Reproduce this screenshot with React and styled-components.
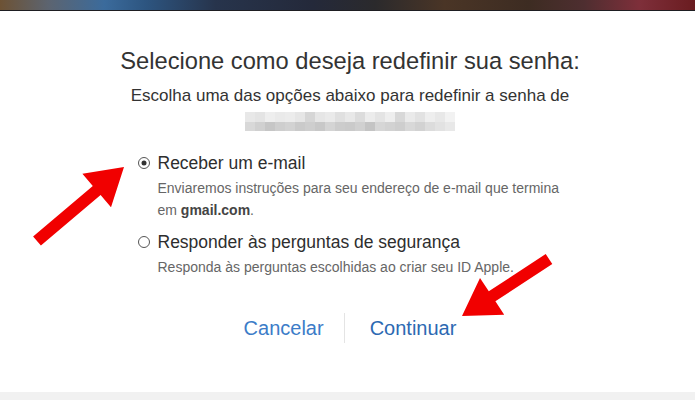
import styled, { createGlobalStyle } from "styled-components";

const GlobalStyle = createGlobalStyle`
  html, body {
    margin: 0;
    padding: 0;
    background: #ffffff;
  }
  body {
    font-family: "Liberation Sans", Arial, sans-serif;
  }
`;

// pixelated email (censored in the screenshot)
const blurRows = [
  ["e8", "e4", "ee", "ea", "ec", "e6", "d6", "e6", "ea", "e0", "e8", "dc", "ec", "e4", "ee", "d8", "ea", "e2", "ee", "e8", "f2"],
  ["d8", "d0", "c6", "ce", "d2", "ca", "ce", "c8", "d4", "cc", "ca", "d0", "c4", "d6", "d2", "ce", "d8", "d2", "dc", "e2", "e8"],
];

const App = () => {
  return (
    <Page>
      <GlobalStyle />
      <TopBar />
      <Main>
        <Title>Selecione como deseja redefinir sua senha:</Title>
        <Subtitle>Escolha uma das opções abaixo para redefinir a senha de</Subtitle>
        <Blurred>
          {blurRows.map((row, r) => (
            <BlurRow key={r}>
              {row.map((c, i) => (
                <BlurCell key={i} style={{ background: `#${c}${c}${c}` }} />
              ))}
            </BlurRow>
          ))}
        </Blurred>

        <Options>
          <Option>
            <Label>
              <Radio checked />
              Receber um e-mail
            </Label>
            <Description>
              Enviaremos instruções para seu endereço de e-mail que termina
              <br />
              em <strong>gmail.com</strong>.
            </Description>
          </Option>
          <Option $gap={10}>
            <Label>
              <Radio />
              Responder às perguntas de segurança
            </Label>
            <Description>
              Responda às perguntas escolhidas ao criar seu ID Apple.
            </Description>
          </Option>
        </Options>

        <Actions>
          <ActionButton>Cancelar</ActionButton>
          <Divider />
          <ActionButton $primary>Continuar</ActionButton>
        </Actions>
      </Main>
      <Footer />

      <Arrows viewBox="0 0 695 400" width="695" height="400">
        <polygon
          points="124,167 111,207.2 100.6,195 40.9,245.5 33.1,236.5 92.8,186 82.4,173.8"
          fill="#f10000"
        />
        <polygon
          points="462,316 480,277.9 488.8,291.3 545.7,254 552.3,264 495.4,301.3 504.2,314.7"
          fill="#f10000"
        />
      </Arrows>
    </Page>
  );
};

const Page = styled.div`
  position: relative;
  height: 100vh;
  display: flex;
  flex-direction: column;
  overflow: hidden;
`;

const TopBar = styled.div`
  height: 10px;
  flex-shrink: 0;
  background: linear-gradient(
    90deg,
    #6d5234 0%,
    #5c6470 7%,
    #3b6b9c 15%,
    #2d5580 21%,
    #27344c 31%,
    #24293a 45%,
    #2b2a2c 54%,
    #4a3526 64%,
    #3d2c22 76%,
    #4e2e30 84%,
    #7e2f3a 92%,
    #6a1c20 100%
  );
  border-bottom: 1px solid #1e1e22;
`;

const Main = styled.main`
  flex: 1;
  display: flex;
  flex-direction: column;
  align-items: center;
  padding: 35px 0 0 5px;
`;

const Title = styled.h1`
  margin: 0;
  font-size: 23.7px;
  line-height: 30px;
  font-weight: 400;
  color: #333333;
`;

const Subtitle = styled.p`
  margin: 8px 0 0;
  font-size: 17px;
  line-height: 24px;
  color: #333333;
`;

const Blurred = styled.div`
  margin-top: 4px;
  display: flex;
  flex-direction: column;
`;

const BlurRow = styled.div`
  display: flex;
`;

const BlurCell = styled.span`
  width: 10px;
  height: 9.5px;
`;

const Options = styled.div`
  width: 425px;
  margin-top: 21px;
  display: flex;
  flex-direction: column;
`;

const Option = styled.div`
  margin-top: ${(p) => p.$gap || 0}px;
  display: flex;
  flex-direction: column;
`;

const Label = styled.label`
  display: flex;
  align-items: center;
  gap: 8px;
  font-size: 17.5px;
  line-height: 22px;
  color: #2e2e2e;
`;

const Radio = styled.span`
  position: relative;
  flex-shrink: 0;
  width: 12px;
  height: 12px;
  box-sizing: border-box;
  border: 1.3px solid #555555;
  border-radius: 50%;

  &::after {
    content: "";
    display: ${(p) => (p.checked ? "block" : "none")};
    position: absolute;
    top: 50%;
    left: 50%;
    width: 5px;
    height: 5px;
    border-radius: 50%;
    background: #333333;
    transform: translate(-50%, -50%);
  }
`;

const Description = styled.p`
  margin: 3px 0 0 20px;
  font-size: 14px;
  line-height: 22px;
  color: #666666;
  white-space: nowrap;

  strong {
    color: #444444;
  }
`;

const Actions = styled.div`
  margin-top: 35px;
  display: flex;
  align-items: center;
`;

const ActionButton = styled.button`
  border: none;
  background: none;
  padding: 0;
  margin: 0 ${(p) => (p.$primary ? "0 0 25px" : "20px 0 0")};
  font-family: inherit;
  font-size: 20px;
  line-height: 30px;
  color: ${(p) => (p.$primary ? "#2c69b2" : "#3c7cc8")};
  cursor: pointer;
`;

const Divider = styled.span`
  width: 1px;
  height: 30px;
  background: #e4e4e4;
`;

const Footer = styled.div`
  height: 8px;
  flex-shrink: 0;
  background: #f1f1f1;
`;

const Arrows = styled.svg`
  position: absolute;
  top: 0;
  left: 0;
  pointer-events: none;
`;

export default App;
